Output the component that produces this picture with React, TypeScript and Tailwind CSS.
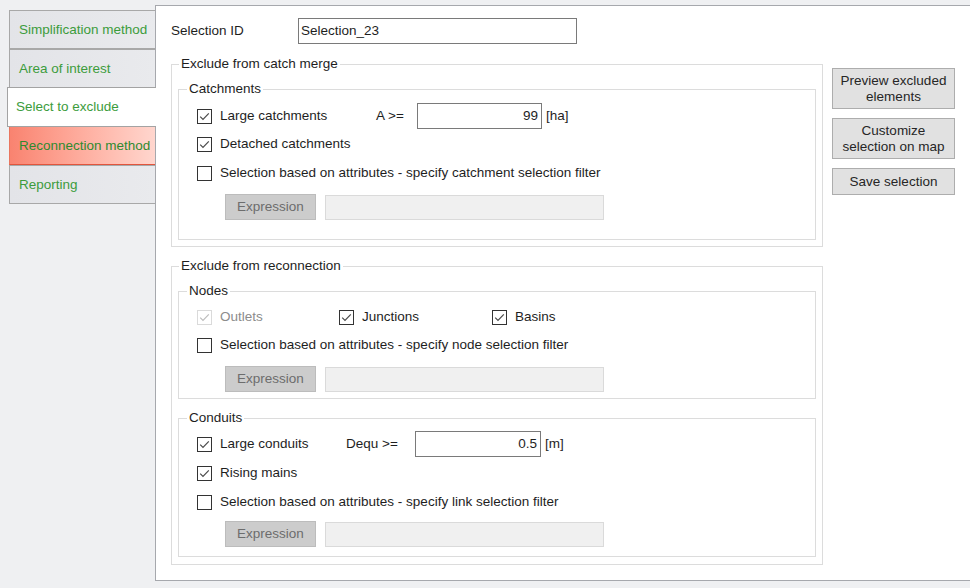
import React from "react";

const FONT = { fontFamily: '"Liberation Sans", Arial, sans-serif' };

function Check({ checked, disabled }: { checked?: boolean; disabled?: boolean }) {
  return (
    <span
      className={
        disabled
          ? "w-[15px] h-[15px] border border-[#dadada] bg-white flex items-center justify-center shrink-0"
          : "w-[15px] h-[15px] border border-[#333333] bg-white flex items-center justify-center shrink-0"
      }
    >
      {checked && (
        <svg width="13" height="13" viewBox="0 0 13 13">
          <path
            d="M2.2 6.6 L5 9.4 L10.8 3.4"
            fill="none"
            stroke={disabled ? "#bdbdbd" : "#4a4a4a"}
            strokeWidth="1.2"
          />
        </svg>
      )}
    </span>
  );
}

function CheckLabel({
  label,
  checked,
  disabled,
  className,
}: {
  label: string;
  checked?: boolean;
  disabled?: boolean;
  className?: string;
}) {
  return (
    <div className={"flex items-center gap-[8px] " + (className ?? "")}>
      <Check checked={checked} disabled={disabled} />
      <span className={disabled ? "text-[#8c8c8c]" : "text-[#1e1e1e]"}>{label}</span>
    </div>
  );
}

function ExpressionRow({ className }: { className: string }) {
  return (
    <div className={"flex items-center pl-[46px] " + className}>
      <div className="w-[91px] h-[26px] bg-[#cccccc] border border-[#bcbcbc] flex items-center justify-center text-[#6d6d6d]">
        Expression
      </div>
      <div className="ml-[9px] w-[279px] h-[25px] bg-[#f0f0f0] border border-[#dadada]" />
    </div>
  );
}

function Tab({ label, kind }: { label: string; kind: "normal" | "selected" | "red" }) {
  if (kind === "selected") {
    return (
      <div className="relative z-10 ml-[7px] w-[149px] h-[40px] -my-px bg-white border border-r-0 border-[#a3a3a3] flex items-center pl-[8px] text-[#3c9c3c]">
        {label}
      </div>
    );
  }
  if (kind === "red") {
    return (
      <div className="ml-[9px] w-[146px] h-[39px] bg-gradient-to-r from-[#f98370] to-[#ffd6ce] border border-r-0 border-[#e9765f] border-b-[#e2553d] border-t-[#b9a09a] flex items-center pl-[9px] text-[#2f8a2f]">
        {label}
      </div>
    );
  }
  return (
    <div className="ml-[9px] w-[146px] h-[39px] bg-gradient-to-r from-[#e3e4e8] to-[#e9eaed] border border-r-0 border-[#a8a8a8] flex items-center pl-[9px] text-[#3c9c3c]">
      {label}
    </div>
  );
}

export default function App() {
  return (
    <div
      className="w-[970px] h-[588px] bg-[#eff0f2] flex overflow-hidden text-[13.5px] leading-[16px]"
      style={FONT}
    >
      {/* Tabs */}
      <div className="w-[155px] shrink-0 flex flex-col pt-[10px]">
        <Tab label="Simplification method" kind="normal" />
        <Tab label="Area of interest" kind="normal" />
        <Tab label="Select to exclude" kind="selected" />
        <Tab label="Reconnection method" kind="red" />
        <Tab label="Reporting" kind="normal" />
      </div>

      {/* Panel */}
      <div className="mt-[5px] h-[576px] w-[830px] shrink-0 bg-white border border-r-0 border-[#a6a8ad] flex flex-col pl-[15px] pt-[12px] text-[#1e1e1e]">
        {/* Selection ID */}
        <div className="flex items-center h-[26px]">
          <span className="w-[127px]">Selection ID</span>
          <div className="w-[279px] h-[26px] border border-[#7a7a7a] flex items-center pl-[2px]">
            Selection_23
          </div>
        </div>

        <div className="mt-[12px] flex items-start gap-[9px]">
          {/* Groups column */}
          <div className="w-[652px] shrink-0 flex flex-col">
            {/* Exclude from catch merge */}
            <fieldset className="border border-[#dcdcdc] flex flex-col">
              <legend className="ml-[7px] px-[2px] leading-[16px]">Exclude from catch merge</legend>
              <fieldset className="mx-[6px] mt-[9px] mb-[6px] border border-[#dcdcdc] pl-[18px] pt-[6px] pb-[19px]">
                <legend className="-ml-[10px] px-[2px] leading-[16px]">Catchments</legend>
                <div className="h-[26px] flex items-center">
                  <CheckLabel label="Large catchments" checked className="w-[179px]" />
                  <span className="w-[41px]">A &gt;=</span>
                  <div className="w-[125px] h-[26px] border border-[#7a7a7a] flex items-center justify-end pr-[3px]">
                    99
                  </div>
                  <span className="ml-[4px]">[ha]</span>
                </div>
                <div className="mt-[2px] h-[26px] flex items-center">
                  <CheckLabel label="Detached catchments" checked />
                </div>
                <div className="mt-[3px] h-[26px] flex items-center">
                  <CheckLabel label="Selection based on attributes - specify catchment selection filter" />
                </div>
                <ExpressionRow className="mt-[8px] -ml-[18px]" />
              </fieldset>
            </fieldset>

            {/* Exclude from reconnection */}
            <fieldset className="mt-[11px] border border-[#dcdcdc] flex flex-col">
              <legend className="ml-[7px] px-[2px] leading-[16px]">Exclude from reconnection</legend>
              <fieldset className="mx-[6px] mt-[9px] border border-[#dcdcdc] pl-[18px] pt-[5px] pb-[6px]">
                <legend className="-ml-[10px] px-[2px] leading-[16px]">Nodes</legend>
                <div className="h-[26px] flex items-center">
                  <CheckLabel label="Outlets" checked disabled className="w-[142px]" />
                  <CheckLabel label="Junctions" checked className="w-[153px]" />
                  <CheckLabel label="Basins" checked />
                </div>
                <div className="mt-[2px] h-[26px] flex items-center">
                  <CheckLabel label="Selection based on attributes - specify node selection filter" />
                </div>
                <ExpressionRow className="mt-[8px] -ml-[18px]" />
              </fieldset>
              <fieldset className="mx-[6px] mt-[11px] mb-[7px] border border-[#dcdcdc] pl-[18px] pt-[5px] pb-[9px]">
                <legend className="-ml-[10px] px-[2px] leading-[16px]">Conduits</legend>
                <div className="h-[26px] flex items-center">
                  <CheckLabel label="Large conduits" checked className="w-[149px]" />
                  <span className="w-[69px]">Dequ &gt;=</span>
                  <div className="w-[126px] h-[26px] border border-[#7a7a7a] flex items-center justify-end pr-[3px]">
                    0.5
                  </div>
                  <span className="ml-[4px]">[m]</span>
                </div>
                <div className="mt-[3px] h-[26px] flex items-center">
                  <CheckLabel label="Rising mains" checked />
                </div>
                <div className="mt-[3px] h-[26px] flex items-center">
                  <CheckLabel label="Selection based on attributes - specify link selection filter" />
                </div>
                <ExpressionRow className="mt-[6px] -ml-[18px]" />
              </fieldset>
            </fieldset>
          </div>

          {/* Buttons */}
          <div className="mt-[12px] w-[123px] shrink-0 flex flex-col gap-[9px] text-[#262626]">
            <div className="h-[41px] bg-[#e1e1e1] border border-[#adadad] flex items-center justify-center text-center">
              Preview excluded
              <br />
              elements
            </div>
            <div className="h-[41px] bg-[#e1e1e1] border border-[#adadad] flex items-center justify-center text-center">
              Customize
              <br />
              selection on map
            </div>
            <div className="h-[27px] bg-[#e1e1e1] border border-[#adadad] flex items-center justify-center text-center">
              Save selection
            </div>
          </div>
        </div>
      </div>
    </div>
  );
}
